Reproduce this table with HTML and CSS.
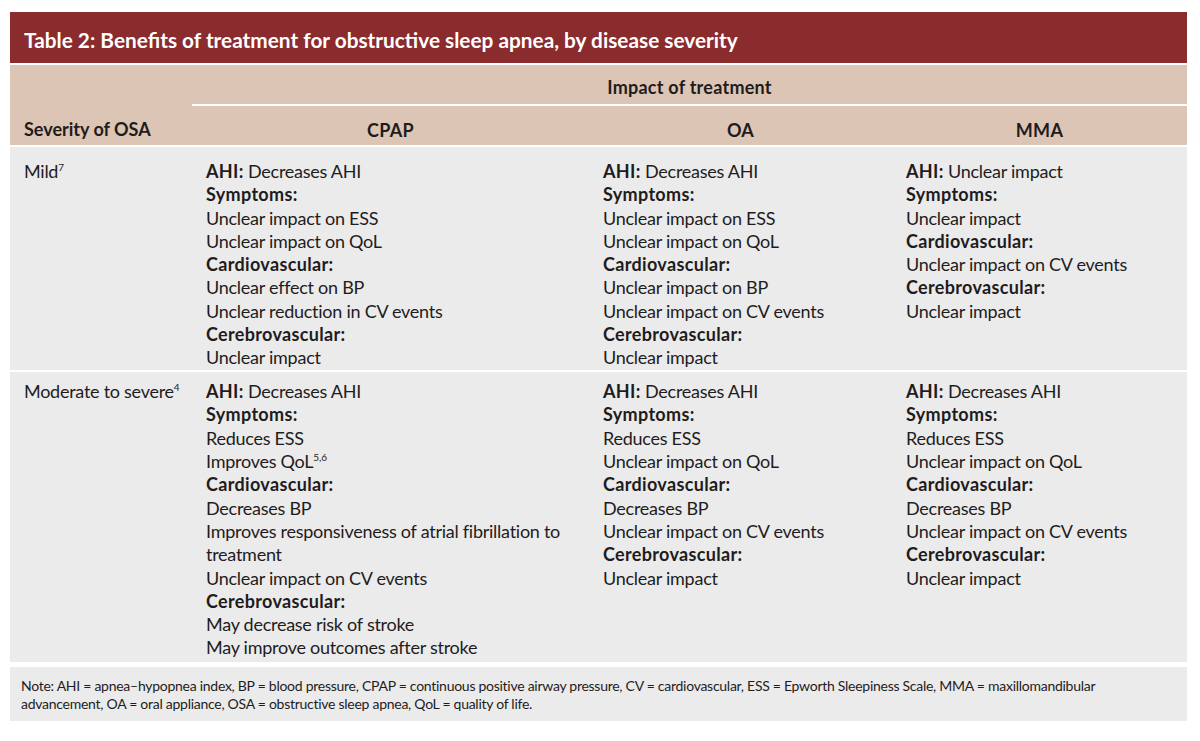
FILE: index.html
```html
<!DOCTYPE html>
<html lang="en">
<head>
<meta charset="utf-8">
<title>Table 2</title>
<link rel="stylesheet" href="styles.css">
</head>
<body>
<div class="wrap">
  <div class="title">Table 2: Benefits of treatment for obstructive sleep apnea, by disease severity</div>
  <table class="tbl">
    <colgroup>
      <col class="c1"><col class="c2"><col class="c3"><col class="c4">
    </colgroup>
    <thead>
      <tr>
        <th rowspan="2" class="sev">Severity of OSA</th>
        <th colspan="3" class="impact">Impact of treatment</th>
      </tr>
      <tr class="sub">
        <th>CPAP</th><th>OA</th><th>MMA</th>
      </tr>
    </thead>
    <tbody>
      <tr class="r1">
        <td class="lead">Mild<sup>7</sup></td>
        <td>
          <div><b>AHI:</b> Decreases AHI</div>
          <div><b>Symptoms:</b></div>
          <div>Unclear impact on ESS</div>
          <div>Unclear impact on QoL</div>
          <div><b>Cardiovascular:</b></div>
          <div>Unclear effect on BP</div>
          <div>Unclear reduction in CV events</div>
          <div><b>Cerebrovascular:</b></div>
          <div>Unclear impact</div>
        </td>
        <td>
          <div><b>AHI:</b> Decreases AHI</div>
          <div><b>Symptoms:</b></div>
          <div>Unclear impact on ESS</div>
          <div>Unclear impact on QoL</div>
          <div><b>Cardiovascular:</b></div>
          <div>Unclear impact on BP</div>
          <div>Unclear impact on CV events</div>
          <div><b>Cerebrovascular:</b></div>
          <div>Unclear impact</div>
        </td>
        <td>
          <div><b>AHI:</b> Unclear impact</div>
          <div><b>Symptoms:</b></div>
          <div>Unclear impact</div>
          <div><b>Cardiovascular:</b></div>
          <div>Unclear impact on CV events</div>
          <div><b>Cerebrovascular:</b></div>
          <div>Unclear impact</div>
        </td>
      </tr>
      <tr class="r2">
        <td class="lead">Moderate to severe<sup>4</sup></td>
        <td>
          <div><b>AHI:</b> Decreases AHI</div>
          <div><b>Symptoms:</b></div>
          <div>Reduces ESS</div>
          <div>Improves QoL<sup>5,6</sup></div>
          <div><b>Cardiovascular:</b></div>
          <div>Decreases BP</div>
          <div>Improves responsiveness of atrial fibrillation to treatment</div>
          <div>Unclear impact on CV events</div>
          <div><b>Cerebrovascular:</b></div>
          <div>May decrease risk of stroke</div>
          <div>May improve outcomes after stroke</div>
        </td>
        <td>
          <div><b>AHI:</b> Decreases AHI</div>
          <div><b>Symptoms:</b></div>
          <div>Reduces ESS</div>
          <div>Unclear impact on QoL</div>
          <div><b>Cardiovascular:</b></div>
          <div>Decreases BP</div>
          <div>Unclear impact on CV events</div>
          <div><b>Cerebrovascular:</b></div>
          <div>Unclear impact</div>
        </td>
        <td>
          <div><b>AHI:</b> Decreases AHI</div>
          <div><b>Symptoms:</b></div>
          <div>Reduces ESS</div>
          <div>Unclear impact on QoL</div>
          <div><b>Cardiovascular:</b></div>
          <div>Decreases BP</div>
          <div>Unclear impact on CV events</div>
          <div><b>Cerebrovascular:</b></div>
          <div>Unclear impact</div>
        </td>
      </tr>
    </tbody>
  </table>
  <div class="note">Note: AHI = apnea–hypopnea index, BP = blood pressure, CPAP = continuous positive airway pressure, CV = cardiovascular, ESS = Epworth Sleepiness Scale, MMA = maxillomandibular advancement, OA = oral appliance, OSA = obstructive sleep apnea, QoL = quality of life.</div>
</div>
</body>
</html>
```
FILE: styles.css
```css
html, body {
  margin: 0;
  padding: 0;
  background: #ffffff;
}
body {
  font-family: Lato, "Liberation Sans", sans-serif;
  color: #1f1c1d;
}
.wrap {
  width: 1177px;
  margin: 12px 0 0 10px;
}
.title {
  background: #8a2b2d;
  color: #ffffff;
  font-weight: 700;
  font-size: 20.8px;
  height: 46px;
  line-height: 46px;
  padding: 5px 0 0 14px;
  margin-bottom: 2px;
}
.tbl {
  width: 1177px;
  table-layout: fixed;
  border-collapse: separate;
  border-spacing: 0;
  font-size: 18px;
}
.c1 { width: 182px; }
.c2 { width: 397px; }
.c3 { width: 303px; }
.c4 { width: 295px; }
.tbl th {
  background: #dcc5b4;
  font-weight: 700;
  text-align: center;
  padding: 0 14px;
  line-height: 22px;
  letter-spacing: 0.25px;
}
.tbl th.sev {
  text-align: left;
  vertical-align: bottom;
  padding-bottom: 5px;
  border-bottom: 2px solid #ffffff;
  letter-spacing: 0;
}
.tbl th.impact {
  height: 41px;
  box-sizing: border-box;
  border-bottom: 2px solid #ffffff;
  padding-top: 5px;
}
.tbl tr.sub th {
  height: 41px;
  box-sizing: border-box;
  border-bottom: 2px solid #ffffff;
  padding-top: 9px;
}
.tbl td {
  background: #ebebeb;
  vertical-align: top;
  padding: 13px 14px 0;
  line-height: 23.3px;
  letter-spacing: -0.26px;
}
.tbl td.lead {
  white-space: nowrap;
  padding-right: 4px;
}
.tbl tr.r1 td {
  border-bottom: 2px solid #ffffff;
}
.tbl tr.r2 td {
  padding-top: 8.5px;
  padding-bottom: 2.5px;
}
.tbl b {
  font-weight: 700;
  letter-spacing: 0.33px;
}
sup {
  font-size: 10px;
  line-height: 0;
  vertical-align: 7px;
  letter-spacing: 0;
}
.note {
  margin-top: 5px;
  background: #ebebeb;
  font-size: 14px;
  letter-spacing: -0.27px;
  line-height: 18px;
  padding: 10px 60px 8px 11px;
}
```
